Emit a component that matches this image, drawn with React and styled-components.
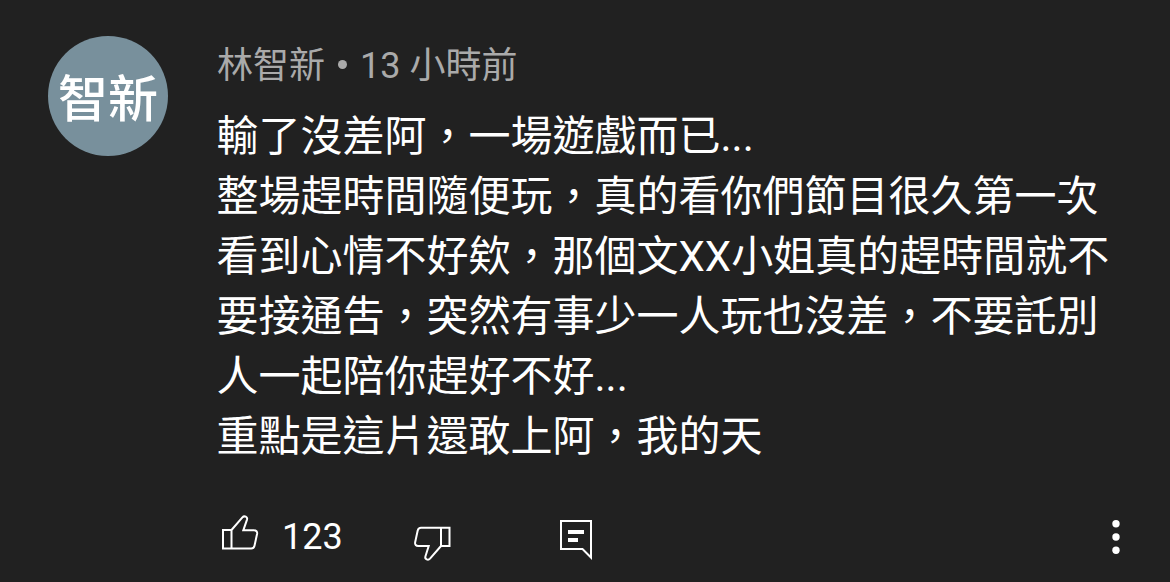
import styled, { createGlobalStyle } from 'styled-components';

const GlobalStyle = createGlobalStyle`
    body {
        margin: 0;
        background: #212121;
    }
`;

const Comment = styled.article`
    box-sizing: border-box;
    display: flex;
    width: 1170px;
    height: 582px;
    padding: 36px 34px 0 48px;
    overflow: hidden;
    background: #212121;
    color: #fff;
    font-family: Roboto, 'Noto Sans CJK TC', sans-serif;
`;

const Avatar = styled.div`
    box-sizing: border-box;
    display: flex;
    flex: none;
    align-items: center;
    justify-content: center;
    width: 120px;
    height: 120px;
    margin-right: 48px;
    padding-top: 7px;
    border-radius: 50%;
    background: #78909c;
    font-size: 50px;
    font-weight: 500;
    line-height: 60px;
`;

const Body = styled.div`
    flex: 1;
    min-width: 0;
`;

const Meta = styled.header`
    display: flex;
    align-items: center;
    height: 60px;
    padding-left: 1px;
    color: #aaa;
    font-size: 36px;
    line-height: 60px;
    white-space: pre;
`;

const Separator = styled.span`
    flex: none;
    width: 9px;
    height: 9px;
    margin: 0 13px 3px;
    border-radius: 50%;
    background: currentColor;
`;

const Content = styled.p`
    margin: 11px 0 0;
    padding-left: 0.5px;
    font-size: 42px;
    line-height: 60px;
    white-space: pre;
`;

const Actions = styled.footer`
    display: flex;
    align-items: center;
    height: 60px;
    margin-top: 40px;
`;

const Action = styled.button`
    display: flex;
    align-items: center;
    width: ${(props) => props.$width};
    height: 60px;
    padding: 0;
    border: 0;
    background: none;
    color: inherit;
    font: inherit;
    font-size: 36px;
    svg {
        flex: none;
        overflow: visible;
    }
`;

const Count = styled.span`
    margin-left: 22px;
`;

const MenuButton = styled(Action)`
    justify-content: center;
    margin-left: auto;
`;

const lines = [
    '輸了沒差阿，一場遊戲而已...',
    '整場趕時間隨便玩，真的看你們節目很久第一次',
    '看到心情不好欸，那個文XX小姐真的趕時間就不',
    '要接通吿，突然有事少一人玩也沒差，不要託別',
    '人一起陪你趕好不好...',
    '重點是這片還敢上阿，我的天',
];

function ThumbUp() {
    return (
        <svg width="44" height="44" viewBox="0 0 44 44" fill="none" stroke="#fff" strokeWidth="2">
            <path d="M7 15h8.5v18.5H7zM15.5 15 26.4 2.4c2-2.2 5.4-.4 4.6 2.2L27.3 15.3H38c2.1 0 3.5 1.4 3.1 3.5l-2.6 11.9c-.4 1.7-1.8 2.8-3.3 2.8H15.5" />
        </svg>
    );
}

function ThumbDown() {
    return (
        <svg width="44" height="44" viewBox="0 0 44 44" fill="none" stroke="#fff" strokeWidth="2">
            <path d="M32 12.7h8.5V31H32zM32 31 21 43.7c-2 2.2-5.4.4-4.6-2.2L19.7 31H9.2c-2.1 0-3.5-1.4-3.1-3.5l2.6-12c.4-1.7 1.8-2.8 3.3-2.8h20" />
        </svg>
    );
}

function CommentIcon() {
    return (
        <svg width="34" height="42" viewBox="0 0 34 42" fill="none">
            <path d="M2 5h30v36.5L23.5 33H2z" stroke="#fff" strokeWidth="2" />
            <path d="M9 16h16M9 24h10" stroke="#fff" strokeWidth="4" />
        </svg>
    );
}

function Dots() {
    return (
        <svg width="8" height="36" viewBox="0 0 8 36" fill="#fff">
            <circle cx="4" cy="4.7" r="3.7" />
            <circle cx="4" cy="18" r="3.7" />
            <circle cx="4" cy="31.3" r="3.7" />
        </svg>
    );
}

export default function App() {
    return (
        <>
            <GlobalStyle />
            <Comment>
                <Avatar>智新</Avatar>
                <Body>
                    <Meta>
                        <span>林智新</span>
                        <Separator />
                        <span>13 小時前</span>
                    </Meta>
                    <Content>{lines.join('\n')}</Content>
                    <Actions>
                        <Action $width="193px" aria-label="Like">
                            <ThumbUp />
                            <Count>123</Count>
                        </Action>
                        <Action $width="150px" aria-label="Dislike">
                            <ThumbDown />
                        </Action>
                        <Action $width="60px" aria-label="Reply">
                            <CommentIcon />
                        </Action>
                        <MenuButton $width="40px" aria-label="More">
                            <Dots />
                        </MenuButton>
                    </Actions>
                </Body>
            </Comment>
        </>
    );
}
